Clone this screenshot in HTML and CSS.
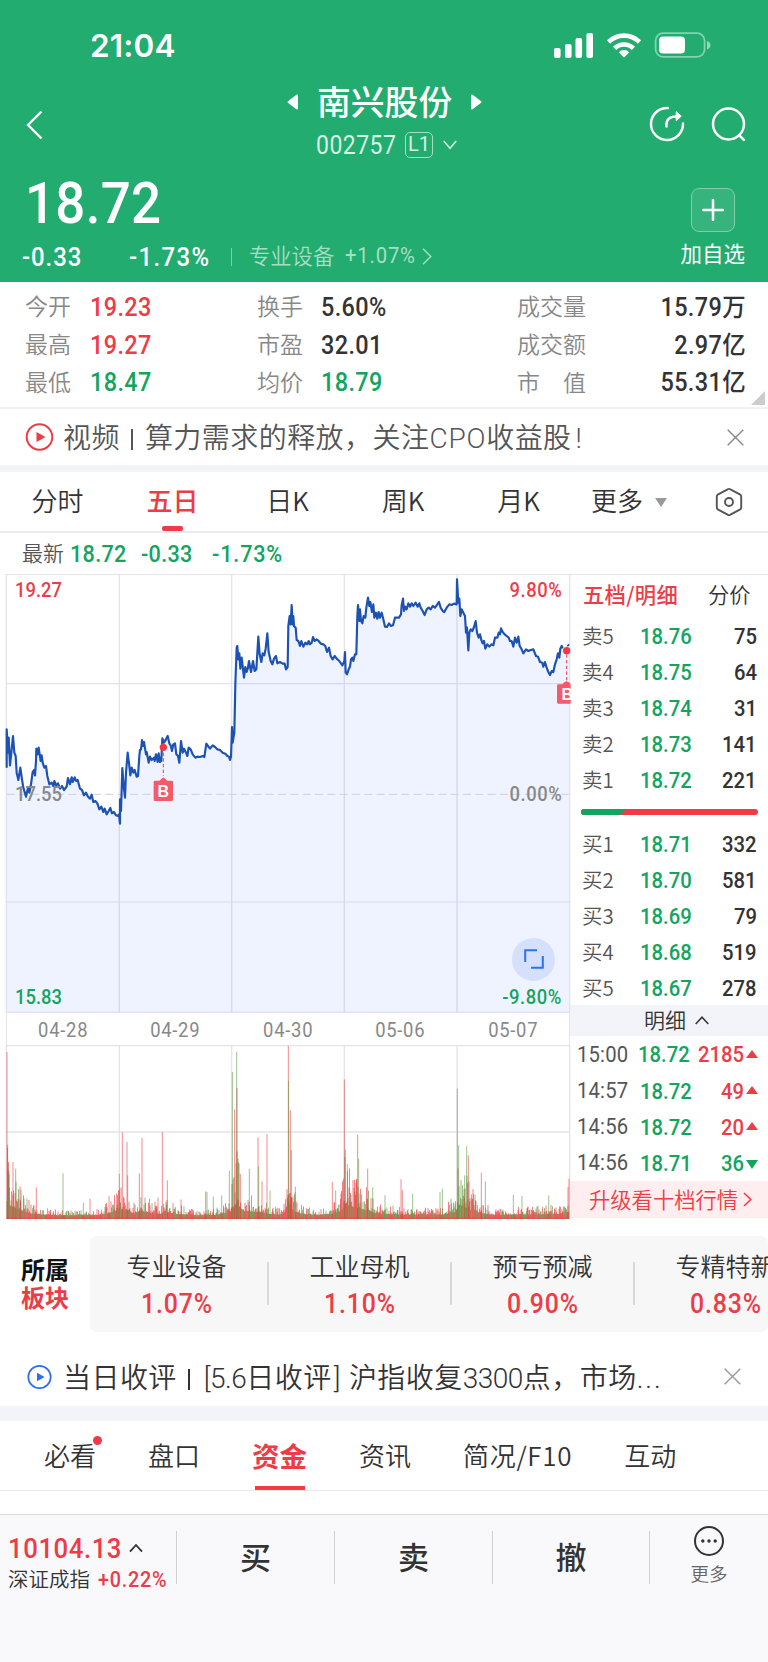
FILE: index.html
```html
<!DOCTYPE html>
<html lang="zh-CN">
<head>
<meta charset="utf-8">
<title>南兴股份 002757</title>
<link rel="stylesheet" href="styles.css">
</head>
<body>
<div class="app">
  <header class="head">
    <div class="status">
      <span class="clock">21:04</span>
      <svg class="status-icons" width="160" height="28" viewBox="0 0 160 28" fill="#fff">
        <rect x="1" y="16" width="6.6" height="10" rx="2"/><rect x="12" y="12" width="6.6" height="14" rx="2"/><rect x="22.5" y="6" width="6.6" height="20" rx="2"/><rect x="33.4" y="1" width="6.6" height="25" rx="2"/>
        <path d="M71 25.5l-5.3-5.3a7.6 7.6 0 0 1 10.6 0z"/>
        <path d="M61.600 16.400a13.300 13.300 0 0 1 18.800 0M55.500 10.000a22.000 22.000 0 0 1 31.000 0" fill="none" stroke="#fff" stroke-width="4.600"/>
        <rect x="102.600" y="1.200" width="49" height="23.600" rx="7.500" fill="none" stroke="#fff" stroke-opacity=".45" stroke-width="1.800"/>
        <rect x="106" y="4.600" width="26" height="17" rx="4"/>
        <path d="M154 9q3.400 1 3.400 4.200T154 17.400z" opacity=".5"/>
      </svg>
    </div>
    <div class="nav">
      <svg class="back" width="18" height="30" viewBox="0 0 18 30"><path d="M15.500 1.500L2 15l13.500 13.500" fill="none" stroke="#fff" stroke-width="2.400"/></svg>
      <div class="name-block">
        <div class="name-row">
          <svg width="12" height="16" viewBox="0 0 12 16"><path d="M10 1.500L1.500 8l8.500 6.500z" fill="#fff" stroke="#fff" stroke-width="2" stroke-linejoin="round"/></svg>
          <h1>南兴股份</h1>
          <svg width="12" height="16" viewBox="0 0 12 16"><path d="M2 1.500L10.500 8L2 14.500z" fill="#fff" stroke="#fff" stroke-width="2" stroke-linejoin="round"/></svg>
        </div>
        <div class="code-row">
          <span class="num code">002757</span><span class="level">L1</span>
          <svg width="14" height="10" viewBox="0 0 14 10"><path d="M.7 1L7 8.300L13.300 1" fill="none" stroke="#d8f2e5" stroke-width="1.500"/></svg>
        </div>
      </div>
      <div class="nav-icons">
        <svg width="36" height="36" viewBox="0 0 36 36" fill="none" stroke="#fff" stroke-width="2.500" stroke-linecap="round"><path d="M18.800 2A16 16 0 1 0 34 17.500"/><path d="M17.500 20.500C17 13.500 20 10.200 30 10.200"/><path d="M27.500 5.800l4.700 4.400-4.700 4.400z" fill="#fff" stroke-width="1" stroke-linejoin="round"/></svg>
        <svg width="36" height="36" viewBox="0 0 36 36" fill="none" stroke="#fff" stroke-width="2.500" stroke-linecap="round"><circle cx="17.500" cy="18" r="15.500"/><path d="M28.300 29.300l4.500 4.500"/></svg>
      </div>
    </div>
    <div class="price-block">
      <div>
        <div class="num price">18.72</div>
        <div class="change-row"><span class="num chg">-0.33</span><span class="num pct">-1.73%</span><i></i><span class="ind">专业设备</span><span class="num ind-pct">+1.07%</span>
          <svg width="10" height="17" viewBox="0 0 10 17"><path d="M1 .8l7.800 7.700L1 16.200" fill="none" stroke="#a6dec5" stroke-width="1.400"/></svg></div>
      </div>
      <div class="fav">
        <span class="fav-box"><svg width="22" height="22" viewBox="0 0 22 22"><path d="M11 1v20M1 11h20" stroke="#fff" stroke-width="2.500" stroke-linecap="round"/></svg></span>
        <span>加自选</span>
      </div>
    </div>
  </header>

  <section class="quotes">
    <span>今开</span><b class="num up">19.23</b><span>换手</span><b class="num">5.60%</b><span>成交量</span><b class="num right">15.79万</b>
    <span>最高</span><b class="num up">19.27</b><span>市盈</span><b class="num">32.01</b><span>成交额</span><b class="num right">2.97亿</b>
    <span>最低</span><b class="num down">18.47</b><span>均价</span><b class="num down">18.79</b><span>市　值</span><b class="num right">55.31亿</b>
    <em class="corner"></em>
  </section>

  <section class="news top-news">
    <svg class="play" width="28" height="28" viewBox="0 0 28 28"><circle cx="14.500" cy="14" r="12.800" fill="none" stroke="#f03a46" stroke-width="2"/><path d="M11.500 9l9 5-9 5z" fill="#f03a46"/></svg>
    <p>视频<i></i>算力需求的释放，关注<span class="lat">CPO</span>收益股<span class="lat bang">!</span></p>
    <svg class="close" width="17" height="17" viewBox="0 0 17 17"><path d="M.7.7l15.600 15.600M16.300.7L.7 16.300" stroke="#888" stroke-width="1.400"/></svg>
  </section>

  <nav class="chart-tabs">
    <span>分时</span><span class="on">五日</span><span>日K</span><span>周K</span><span>月K</span><span class="menu">更多<em></em></span>
    <svg width="28" height="30" viewBox="0 0 28 30" fill="none" stroke="#555" stroke-width="1.900"><path d="M12.600 2.300q1.400-.8 2.800 0l9.400 5q1.400.8 1.400 2.400v10.600q0 1.600-1.400 2.400l-9.400 5q-1.400.8-2.800 0l-9.400-5q-1.400-.8-1.400-2.400V9.700q0-1.600 1.400-2.400z"/><circle cx="14" cy="15" r="4"/></svg>
  </nav>
  <div class="latest"><span>最新</span><b class="num">18.72</b><b class="num">-0.33</b><b class="num">-1.73%</b></div>

  <section class="market">
    <div class="charts">
      <div class="trend">
        <svg width="571" height="439" viewBox="0 24 1713 1317">
          <g fill="none" stroke="#e4e4e8" stroke-width="4"><path d="M18 25H1710M18 353H1710M18 1339H1710"/><path d="M18 1008H1710" stroke-width="3"/><path d="M19 24V1341M358 24V1341M695 24V1341M1033 24V1341M1371 24V1341M1709 24V1341"/></g>
          <polygon id="area" fill="#2f6bff" fill-opacity=".078"/>
          <path d="M20 685H1706" stroke="#cdd0da" stroke-width="3" stroke-dasharray="24 13"/>
          <polyline id="line" fill="none" stroke="#1c52b4" stroke-width="6.500" stroke-linejoin="round"/>
          <path d="M490 560V630M1700 265V345" stroke="#f03a46" stroke-width="3" stroke-dasharray="10 7"/>
          <path d="M1702 241l5-6" stroke="#1c52b4" stroke-width="5"/>
          <circle cx="490" cy="544" r="11" fill="#f03a46"/><circle cx="1700" cy="254" r="11" fill="#f03a46"/>
          <path d="M461 647q0-3 4-3h13l12-10 12 10h13q4 0 4 3v54q0 4-4 4h-50q-4 0-4-4z" fill="#f25b6a"/>
          <path d="M1671 359q0-4 4-4h12q13-18 25 0v58h-37q-4 0-4-4z" fill="#f25b6a"/>
          <g class="flag"><text x="490" y="692">B</text><text x="1702" y="402">B</text></g>
        </svg>
        <span class="num axis tl up">19.27</span><span class="num axis tr up">9.80%</span>
        <span class="num axis ml">17.55</span><span class="num axis mr">0.00%</span>
        <span class="num axis bl down">15.83</span><span class="num axis br down">-9.80%</span>
        <span class="expand"><svg width="20" height="20" viewBox="0 0 20 20"><path d="M13 1.200H1.200V13M7 18.800h11.800V7" fill="none" stroke="#2b72f0" stroke-width="2"/></svg></span>
      </div>
      <div class="dates"><span class="num">04-28</span><span class="num">04-29</span><span class="num">04-30</span><span class="num">05-06</span><span class="num">05-07</span></div>
      <svg class="volume" width="571" height="174" viewBox="0 193 1713 522">
        <g fill="none" stroke="#e4e4e8" stroke-width="4"><path d="M18 195H1710M18 454H1710M18 713H1710"/><path d="M19 195V715M358 195V715M695 195V715M1033 195V715M1371 195V715M1709 193V715"/></g>
        <g id="bars"></g>
      </svg>
    </div>
    <aside class="book">
      <div class="book-tabs"><b>五档/明细</b><span>分价</span></div>
      <div class="row"><span>卖5</span><b class="num">18.76</b><b class="num q">75</b></div>
      <div class="row"><span>卖4</span><b class="num">18.75</b><b class="num q">64</b></div>
      <div class="row"><span>卖3</span><b class="num">18.74</b><b class="num q">31</b></div>
      <div class="row"><span>卖2</span><b class="num">18.73</b><b class="num q">141</b></div>
      <div class="row"><span>卖1</span><b class="num">18.72</b><b class="num q">221</b></div>
      <div class="ratio"><i></i></div>
      <div class="row"><span>买1</span><b class="num">18.71</b><b class="num q">332</b></div>
      <div class="row"><span>买2</span><b class="num">18.70</b><b class="num q">581</b></div>
      <div class="row"><span>买3</span><b class="num">18.69</b><b class="num q">79</b></div>
      <div class="row"><span>买4</span><b class="num">18.68</b><b class="num q">519</b></div>
      <div class="row"><span>买5</span><b class="num">18.67</b><b class="num q">278</b></div>
      <div class="detail"><span>明细</span><svg width="14" height="9" viewBox="0 0 14 9"><path d="M.7 8L7 1.200L13.300 8" fill="none" stroke="#333" stroke-width="1.500"/></svg></div>
      <div class="row tick"><span class="num">15:00</span><b class="num">18.72</b><b class="num q up">2185</b><em class="tri-up"></em></div>
      <div class="row tick"><span class="num">14:57</span><b class="num">18.72</b><b class="num q up">49</b><em class="tri-up"></em></div>
      <div class="row tick"><span class="num">14:56</span><b class="num">18.72</b><b class="num q up">20</b><em class="tri-up"></em></div>
      <div class="row tick"><span class="num">14:56</span><b class="num">18.71</b><b class="num q down">36</b><em class="tri-down"></em></div>
      <div class="upgrade"><span>升级看十档行情</span><svg width="9" height="15" viewBox="0 0 9 15"><path d="M1 1l6.800 6.500L1 14" fill="none" stroke="#f03a46" stroke-width="1.500"/></svg></div>
    </aside>
  </section>

  <section class="sectors">
    <div class="sector-label"><b>所属</b><b class="up">板块</b></div>
    <div class="sector-list">
      <div><span>专业设备</span><b class="num">1.07%</b></div>
      <div><span>工业母机</span><b class="num">1.10%</b></div>
      <div><span>预亏预减</span><b class="num">0.90%</b></div>
      <div><span>专精特新</span><b class="num">0.83%</b></div>
    </div>
  </section>

  <section class="news bottom-news">
    <svg class="play" width="28" height="28" viewBox="0 0 28 28"><circle cx="14.500" cy="14" r="11.200" fill="none" stroke="#2b6ff0" stroke-width="1.700"/><path d="M12 9.800l7.600 4.200-7.600 4.200z" fill="#2b6ff0"/></svg>
    <p>当日收评<i></i><span class="lat open">[5.6</span>日收评<span class="lat shut">]</span>沪指收复<span class="lat">3300</span>点，市场<span class="lat dots">...</span></p>
    <svg class="close" width="17" height="17" viewBox="0 0 17 17"><path d="M.7.7l15.600 15.600M16.300.7L.7 16.300" stroke="#999" stroke-width="1.400"/></svg>
  </section>

  <nav class="info-tabs">
    <span>必看<em></em></span><span>盘口</span><span class="on">资金</span><span>资讯</span><span class="wide">简况/F10</span><span>互动</span>
  </nav>

  <footer class="bottom">
    <div class="index">
      <div><b class="num">10104.13</b><svg width="14" height="10" viewBox="0 0 14 10"><path d="M1 8.700L7 2l6 6.700" fill="none" stroke="#333" stroke-width="1.800"/></svg></div>
      <div class="index-sub"><span>深证成指</span><span class="num up">+0.22%</span></div>
    </div>
    <div class="act">买</div><div class="act">卖</div><div class="act">撤</div>
    <div class="more"><svg width="32" height="32" viewBox="0 0 32 32"><circle cx="16" cy="16" r="14" fill="none" stroke="#333" stroke-width="2"/><g fill="#333"><circle cx="9.800" cy="16" r="1.700"/><circle cx="16" cy="16" r="1.700"/><circle cx="22.200" cy="16" r="1.700"/></g></svg><span>更多</span></div>
  </footer>
</div>
<script src="chart.js"></script>
</body>
</html>
```
FILE: styles.css
```css
* { box-sizing: border-box; margin: 0; padding: 0; }
body { width: 768px; background: #fff; font-family: "Noto Sans CJK SC", "Noto Sans", sans-serif; color: #333; }
svg { display: block; flex: none; }
i, em { font-style: normal; }
.app { width: 768px; height: 1662px; overflow: hidden; display: flex; flex-direction: column; }
.app > * { flex: none; }
/* Slightly condensed figures */
.num { display: inline-block; font-family: Roboto, "Noto Sans CJK SC", sans-serif; font-weight: 500; white-space: nowrap; transform: scaleX(.92); transform-origin: left center; }
.up { color: #ee3c47; }
.down { color: #13a45f; }

.head { height: 282px; background: #22ac6f; color: #fff; }
.status { height: 74px; padding: 32px 55px 0 90px; display: flex; justify-content: space-between; align-items: flex-start; }
.clock { font: 600 31.500px/28px Inter, sans-serif; letter-spacing: .2px; }
.nav { height: 94px; padding: 0 21px 0 26px; display: grid; grid-template-columns: 256px 1fr 98px; }
.back { margin-top: 36px; }
.name-block { display: flex; flex-direction: column; }
.name-row { display: flex; align-items: center; gap: 18px; height: 56px; margin-left: 5px; }
.name-row h1 { font-size: 33.800px; line-height: 50px; font-weight: 500; margin-top: -2px; }
.code-row { display: flex; align-items: center; height: 30px; padding-left: 34px; }
.code { font-size: 25px; font-weight: 400; color: #d8f2e5; width: 84px; letter-spacing: .5px; }
.level { width: 28px; height: 26px; border: 1.500px solid #a6dec5; border-radius: 5px; margin: 0 10px 0 5px; font: 400 20px/23px Roboto, sans-serif; text-align: center; color: #d8f2e5; }
.nav-icons { display: flex; gap: 26px; padding-top: 32px; }
.price-block { display: flex; justify-content: space-between; padding: 0 23px 0 25px; height: 114px; }
.price { display: block; font-size: 57.500px; line-height: 72px; height: 69px; letter-spacing: .3px; }
.change-row { display: flex; align-items: center; height: 39px; margin-left: -3px; }
.chg, .pct { font-size: 26px; }
.chg { width: 107px; letter-spacing: 1px; }
.pct { width: 102px; letter-spacing: 1.500px; }
.change-row i { width: 1px; height: 18px; background: #7fceaa; margin-right: 17px; }
.ind { font-size: 21.300px; color: #a6dec5; width: 96px; font-weight: 350; margin-top: -4px; }
.ind-pct { font-size: 22px; font-weight: 400; color: #a6dec5; width: 77px; letter-spacing: .9px; margin-top: -2px; }
.fav { display: flex; flex-direction: column; align-items: center; font-size: 21.500px; line-height: 32px; padding-top: 20px; }
.fav-box { width: 44px; height: 44px; border: 1.500px solid #7fceaa; border-radius: 8px; background: #37b47d; display: flex; align-items: center; justify-content: center; margin-bottom: 5px; }

.quotes { position: relative; height: 127px; padding: 6px 22px 0 25px; border-bottom: 2px solid #f1f1f3; display: grid; grid-template-columns: 65px 167px 64px 196px 90px 1fr; grid-auto-rows: 37.700px; align-items: center; }
.quotes span { font-size: 23px; line-height: 37px; color: #888; font-weight: 350; padding-bottom: 2px; white-space: nowrap; }
.quotes b { font-size: 25.500px; line-height: 37px; letter-spacing: .4px; padding-top: 1px; }
.quotes .right { justify-self: end; transform-origin: right center; }
.corner { position: absolute; right: 3px; bottom: 2px; border: 7px solid transparent; border-right-color: #ccc; border-bottom-color: #ccc; }

.news { display: flex; align-items: center; padding-left: 25px; }
.news p { width: 664px; margin: -2px 0 0 10px; font-size: 28px; font-weight: 350; letter-spacing: .45px; white-space: nowrap; color: #555; }
.news i { display: inline-block; width: 2px; height: 21px; background: currentColor; margin: 0 12px 0 11px; vertical-align: -2px; }
.lat { font-family: Roboto, sans-serif; font-weight: 300; letter-spacing: -.5px; }
.top-news { height: 56px; }
.top-news .lat { letter-spacing: .8px; }
.news .bang { margin-left: 4px; }
.top-news + nav { border-top: 7px solid #f3f4f9; }
.chart-tabs { height: 68px; border-bottom: 2px solid #ebebed; display: grid; grid-template-columns: 115px 115px 115px 116px 115px 139px 28px; align-items: center; font-size: 26px; font-weight: 350; color: #333; }
.chart-tabs span { position: relative; text-align: center; line-height: 53px; height: 58px; white-space: nowrap; }
.chart-tabs .on { color: #ee3c47; font-weight: 500; }
.chart-tabs .on::after { content: ""; position: absolute; left: 47px; bottom: 0; width: 21px; height: 5px; border-radius: 2px; background: #ee3c47; }
.chart-tabs .menu { text-align: left; padding-left: 15px; }
.chart-tabs em { display: inline-block; border: 6.500px solid transparent; border-top: 9px solid #999; border-bottom: 0; margin-left: 12px; vertical-align: 4px; }
.latest { height: 41px; display: flex; align-items: center; padding-left: 22px; font-size: 21px; color: #555; }
.latest span { width: 48px; font-weight: 350; margin-top: -3px; }
.latest b { font-size: 23.500px; color: #13a45f; width: 71px; letter-spacing: .3px; }
.latest b:last-child { letter-spacing: .9px; }

.market { display: flex; height: 645px; }
.charts { width: 570px; }
.charts svg { max-width: none; }
.trend { position: relative; height: 439px; }
.flag { font: 700 48px "Liberation Sans", sans-serif; fill: #fff; text-anchor: middle; }
.axis { position: absolute; font-size: 20px; line-height: 24px; font-weight: 500; }
.tr, .mr, .br { transform-origin: right center; letter-spacing: .6px; }
.tl { left: 15px; top: 4px; } .tr { right: 8px; top: 4px; }
.ml { left: 15px; top: 208px; color: #888; } .mr { right: 8px; top: 208px; color: #888; }
.bl { left: 15px; top: 411px; } .br { right: 8px; top: 411px; }
.expand { position: absolute; left: 512px; top: 363.500px; width: 43px; height: 43px; border-radius: 50%; background: #d4e0fd; display: flex; align-items: center; justify-content: center; }
.dates { height: 32px; margin-left: 6px; border-left: 1px solid #e4e4e8; border-right: 1px solid #e4e4e8; display: grid; grid-template-columns: repeat(5, 1fr); text-align: center; align-items: center; font-size: 20px; color: #888; }
.dates .num { font-weight: 400; letter-spacing: .8px; transform-origin: center; padding-top: 1px; }
.book { width: 198px; border-top: 1px solid #e4e4e8; }
.book-tabs { display: flex; height: 43.500px; padding-left: 13px; font-size: 21.300px; line-height: 38px; }
.book-tabs b { width: 125px; font-weight: 500; color: #ee3c47; letter-spacing: .3px; }
.book-tabs span { font-weight: 350; }
.row { display: flex; align-items: center; height: 36.100px; padding: 0 11px 0 12px; font-size: 22px; }
.row span { width: 58px; font-size: 20.500px; line-height: 32px; font-weight: 350; color: #555; margin-top: -3px; }
.row b { color: #13a45f; }
.row .q { margin-left: auto; color: #333; transform-origin: right center; }
.row .q.up { color: #ee3c47; }
.row .q.down { color: #13a45f; }
.ratio { height: 6px; margin: 10px 10px 11px 11px; border-radius: 3px; background: #f03a46; overflow: hidden; }
.ratio i { display: block; width: 45px; height: 6px; background: #13a45f; clip-path: polygon(0 0, 100% 0, 39px 100%, 0 100%); }
.detail { height: 30.500px; margin: -1px 0 1px; background: #f3f4f9; display: flex; align-items: center; padding-left: 74px; gap: 9px; font-size: 21px; line-height: 26px; }
.detail span { margin-top: -4px; font-weight: 350; }
.row.tick { padding: 0 10px 0 7px; }
.row.tick span { width: 63px; font-size: 22px; font-weight: 400; margin-top: 0; letter-spacing: .2px; }
.tri-up, .tri-down { border: 6.500px solid transparent; margin-left: 2px; margin-top: -2px; }
.tri-up { border-top: 0; border-bottom: 8px solid #ee3c47; }
.tri-down { border-bottom: 0; border-top: 9px solid #13a45f; margin-top: 3px; }
.upgrade { height: 37px; background: #feeeef; color: #ee3c47; font-size: 21.300px; line-height: 30px; display: flex; align-items: center; padding-left: 19px; gap: 5px; }
.upgrade span { margin-top: -2px; font-weight: 350; }

.sectors { height: 113px; padding-top: 17px; display: flex; }
.sector-label { width: 90px; display: flex; flex-direction: column; padding: 19px 0 0 21px; font-size: 24px; line-height: 27.500px; color: #111; }
.sector-label .up { color: #ee3c47; }
.sector-list { width: 678px; height: 96px; background: #f7f7f7; border-radius: 7px; overflow: hidden; display: flex; }
.sector-list div { flex: 0 0 183px; position: relative; display: flex; flex-direction: column; align-items: center; left: -5px; padding-top: 11px; }
.sector-list div:not(:last-child)::after { content: ""; position: absolute; right: -.5px; top: 26px; height: 43px; width: 1.500px; background: #d9d9dc; }
.sector-list span { font-size: 25px; line-height: 37px; font-weight: 350; }
.sector-list b { font-size: 27px; line-height: 40px; letter-spacing: .9px; color: #ee3c47; transform-origin: center; }
.bottom-news { height: 74px; padding-top: 15px; }
.bottom-news p { width: 661px; color: #333; }
.news .open { margin-left: 2px; }
.news .shut { margin: 0 9px 0 2px; }
.news .dots { letter-spacing: 2px; }

.info-tabs { height: 108px; border-top: 15px solid #f3f4f9; padding-left: 44px; display: flex; font-size: 26px; font-weight: 350; }
.info-tabs::after { content: ""; position: absolute; left: 0; width: 768px; top: 1490px; height: 1px; background: #ebebed; }
.info-tabs span { position: relative; line-height: 68px; height: 71px; margin-right: 52px; white-space: nowrap; }
.info-tabs .on { color: #ee3c47; font-size: 27.500px; font-weight: 700; }
.info-tabs .on::after { content: ""; position: absolute; left: 3px; bottom: 1px; width: 50px; height: 5px; background: #f03a46; }
.info-tabs .wide { letter-spacing: .7px; }
.info-tabs em { position: absolute; right: -6px; top: 15px; width: 9px; height: 9px; border-radius: 50%; background: #f03a46; }

.bottom { height: 149px; background: #f9f9fc; border-top: 1px solid #dcdce0; display: grid; grid-template-columns: 177px 158px 158px 157px 118px; }
.bottom > div { height: 53px; margin-top: 16px; border-right: 1px solid #d0d0d4; }
.index { padding-left: 8px; }
.index div { display: flex; align-items: center; height: 34px; gap: 0; }
.index b { width: 121px; font-size: 28px; color: #ee3c47; letter-spacing: .6px; }
.index .index-sub { font-size: 20.500px; height: 30px; margin-top: -1px; }
.index-sub span:first-child { width: 90px; font-weight: 350; margin-top: -2px; }
.index-sub .num { font-size: 21.500px; letter-spacing: .8px; }
.act { font-size: 31px; font-weight: 500; text-align: center; line-height: 50px; }
.bottom .more { border: 0; display: flex; flex-direction: column; align-items: center; margin-top: 10px; font-size: 18.500px; font-weight: 350; color: #666; line-height: 33px; }
```
FILE: chart.js
```js
// Coordinates are in thirds of a CSS pixel.
const first = "20,605 20,490 24,560 26,515 30,598 34,560 39,510 43,560 47,570 50,620 55,642 61,605 66,640 70,665 78,692 84,665 88,680 93,655 98,618 102,612 105,628 108,585 109,548 113,565 116,545 122,585 125,568 128,590 133,605 138,600 142,630 148,655 155,650 160,660 163,645 168,658 174,652 180,668 186,660 192,672 200,662 204,636 210,655 215,634 218,648 224,634 228,645 233,642 240,668 246,672 252,688 258,680 264,692 270,698 275,686 280,708 286,705 292,712 298,730 304,722 310,738 314,728 320,745 326,735 331,726 336,742 342,738 348,748 354,750 357,745 360,773 360,700 363,735 367,606 371,660 375,695 378,620 383,560 388,600 391,628 395,605 400,620 404,612 410,632 414,630 418,570 420,552 423,550 426,522 429,540 432,528 438,565 440,558 446,590 450,572 455,582 462,575 464,585 468,565 473,588 476,562 480,588 484,585 487,517 492,530 498,520 503,510 508,532 512,538 516,555 520,535 525,532 529,565 534,570 538,590 543,525 548,560 552,548 558,560 562,570 566,545 572,550 578,565 586,575 592,572 600,573 608,570 613,573 619,533 624,540 630,548 638,538 645,543 652,550 660,552 668,560 676,563 682,570 687,572 690,582 693,572 696,483 698,530 703,500 706,355 710,245 712,240 715,280 718,262 721,308 725,275 729,310 732,335 736,303 740,318 744,305 747,285 753,318 759,285 764,315 769,310 775,212 779,265 784,288 788,262 793,268 797,248 802,202 806,258 812,285 817,295 822,278 828,270 832,292 840,288 848,293 854,293 858,310 863,303";
const second = "25,180 29,150 32,175 35,117 38,175 40,150 42,180 47,185 50,222 55,225 60,240 64,225 70,242 76,230 82,235 86,225 90,235 95,230 99,213 104,225 110,220 116,225 122,233 130,235 136,240 141,258 147,245 152,270 158,280 164,270 170,278 178,285 187,298 193,285 195,258 197,320 201,325 206,310 210,302 213,280 217,275 220,285 225,265 229,265 232,150 234,117 238,165 240,130 243,165 247,172 251,150 256,155 259,125 264,95 268,120 271,108 276,138 280,115 283,155 288,140 292,158 296,138 300,155 305,140 309,155 315,182 321,183 327,172 333,180 339,178 345,155 350,155 357,155 363,145 365,118 369,98 372,135 376,122 380,130 385,112 390,122 395,112 400,120 407,110 413,122 418,112 422,125 428,135 434,147 440,130 446,125 452,130 458,120 465,125 472,115 477,108 482,125 488,135 493,138 500,125 508,115 515,117 522,113 530,115 531,40 535,110 538,98 541,150 545,130 550,140 555,150 558,200 561,185 565,253 568,200 572,190 577,195 582,183 587,165 591,200 596,215 600,205 604,222 608,232 612,225 616,248 622,235 628,242 634,235 640,238 645,215 652,215 656,200 660,205 663,187 668,198 674,205 680,210 686,215 690,225 695,225 700,242 705,215 710,230 715,212 719,240 724,248 730,262 738,250 745,255 752,252 760,250 768,270 774,272 780,288 787,290 790,302 795,288 800,305 805,318 810,327 815,315 820,318 825,295 830,280 834,262 838,275 841,248 845,240 848,247";
const parse = (s, dx) => s.split(" ").map(p => { const [x, y] = p.split(",").map(Number); return [x + dx, y]; });
const pts = [...parse(first, 0), ...parse(second, 840)];
const base = pts.map(p => p.join(",")).join(" ");
document.getElementById("line").setAttribute("points", base);
document.getElementById("area").setAttribute("points", "20,1339 " + base + " 1707,235 1707,1339");

const FLOOR = 714, RED = "#ee2b33", GREEN = "#4d9332";
const envelope = [[20,220],[30,150],[60,90],[90,45],[120,30],[180,18],[250,18],[300,22],[330,50],[358,95],[385,85],[400,40],[420,75],[440,55],[480,35],[500,60],[530,35],[600,18],[650,25],[690,60],[710,190],[730,75],[780,60],[800,40],[850,20],[866,190],[880,80],[900,40],[950,20],[1000,35],[1025,80],[1035,170],[1070,120],[1100,85],[1130,40],[1200,28],[1260,25],[1330,28],[1368,65],[1376,160],[1400,120],[1430,55],[1480,24],[1600,30],[1680,36],[1708,70]];
const peaks = [[21,500,0],[23,222,1],[27,143,1],[39,170,0],[47,150,1],[60,96,0],[109,94,0],[189,136,1],[250,48,1],[270,60,0],[327,68,0],[350,76,0],[358,135,1],[367,259,0],[381,230,0],[383,130,1],[418,136,0],[426,242,0],[474,64,0],[487,260,0],[502,115,0],[543,58,0],[617,82,0],[621,80,1],[640,66,1],[665,70,1],[688,144,1],[697,440,1],[704,328,0],[710,500,1],[711,392,0],[715,170,1],[721,134,0],[748,150,1],[774,244,0],[776,157,1],[786,112,0],[801,254,0],[810,84,1],[865,518,0],[866,414,1],[871,325,0],[874,206,0],[886,96,1],[997,110,0],[1007,85,1],[1033,418,0],[1036,208,1],[1042,164,1],[1073,252,0],[1076,180,1],[1103,150,0],[1118,94,1],[1155,70,1],[1203,118,0],[1207,86,0],[1238,75,1],[1320,80,1],[1327,90,1],[1372,390,1],[1376,220,1],[1394,130,1],[1400,218,1],[1405,190,0],[1444,138,0],[1456,112,1],[1540,72,1],[1566,68,1],[1646,70,1],[1704,95,0],[1707,120,0]];
let seed = 41;
const rand = () => (seed = (seed * 16807) % 2147483647) / 2147483647;
const level = x => {
  const i = Math.max(1, envelope.findIndex(e => e[0] >= x));
  const [a, ha] = envelope[i - 1], [b, hb] = envelope[i];
  return ha + (hb - ha) * (x - a) / (b - a);
};
const bar = (x, h, green, o) => `<rect x="${x - 1.5}" y="${(FLOOR - h).toFixed(1)}" width="3" height="${h.toFixed(1)}" fill="${green ? GREEN : RED}" opacity="${o}"/>`;
let out = "";
for (let x = 21; x < 1706; x += 1.5) {
  const r = rand();
  out += bar(x, 6 + level(x) * (0.22 + 0.85 * r * r * r), rand() < 0.42, 0.6);
}
for (const [x, h, g] of peaks) out += bar(x, h, g, 0.55);
out += `<path d="M19 713H1707" stroke="${RED}" stroke-width="3" opacity=".6"/>`;
document.getElementById("bars").innerHTML = out;
```
